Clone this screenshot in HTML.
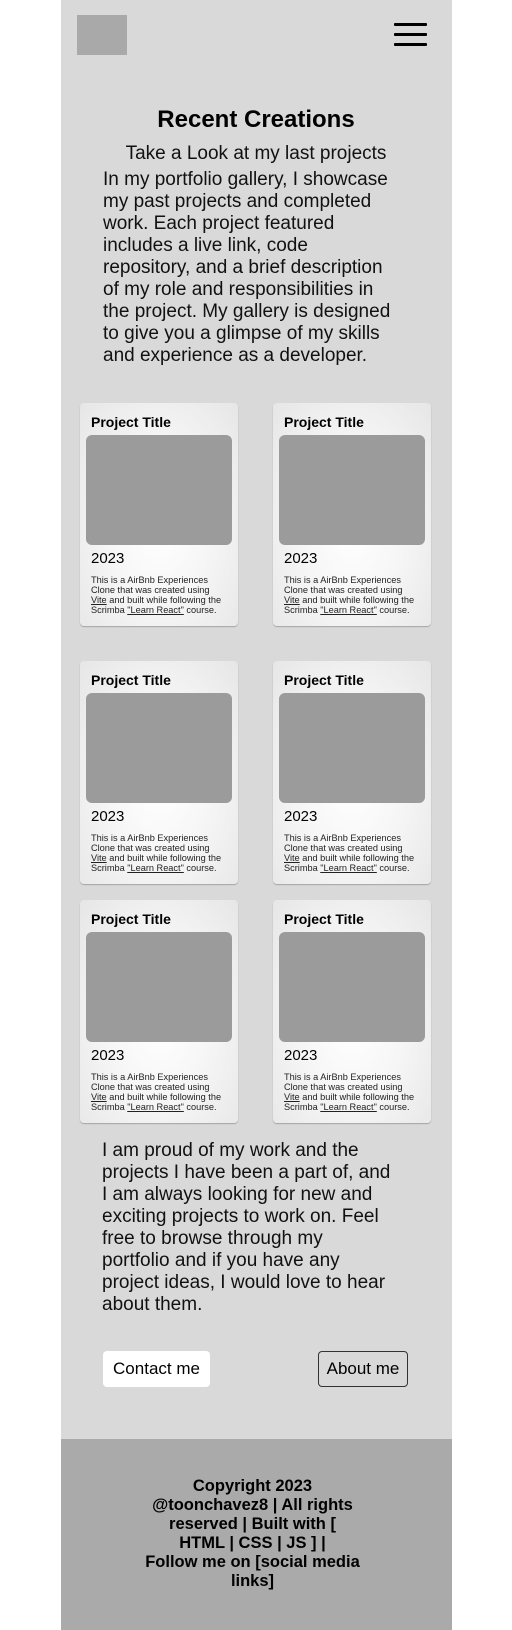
<!DOCTYPE html>
<html><head><meta charset="utf-8"><style>
*{margin:0;padding:0;box-sizing:border-box}
body{width:512px;height:1630px;background:#fff;font-family:"Liberation Sans",sans-serif;color:#000;position:relative;overflow:hidden}
.col{position:absolute;left:61px;top:0;width:391px;height:1630px;background:#d9d9d9}
.logo{position:absolute;left:77px;top:15px;width:50px;height:40px;background:#a9a9a9}
.hb{position:absolute;left:394px;width:33px;height:3px;background:#000;border-radius:1px}
.t{position:absolute;white-space:nowrap}
.card{position:absolute;width:158px;height:223px;border-radius:4px;background:radial-gradient(ellipse at 50% 55%,#fff 0%,#f6f6f6 45%,#e6e6e6 100%);box-shadow:0 1px 1px rgba(0,0,0,.25)}
.card .pt{position:absolute;left:11px;top:11px;font-weight:bold;font-size:14px}
.card .img{position:absolute;left:6px;top:32px;width:146px;height:110px;background:#9b9b9b;border-radius:6px}
.card .yr{position:absolute;left:11px;top:147px;font-size:15px}
.card .d{position:absolute;left:11px;top:172px;font-size:9.2px;line-height:10px;width:150px;color:#222;white-space:nowrap}
.card u{text-decoration:underline}
.p{position:absolute;font-size:19px;line-height:22px;color:#111}
.btn{position:absolute;top:1351px;height:36px;font-size:17px;line-height:36px;text-align:center;border-radius:4px}
.foot{position:absolute;left:61px;top:1439px;width:391px;height:191px;background:#aaa}
.ft{position:absolute;left:-4px;width:391px;top:38px;text-align:center;font-weight:bold;font-size:16.5px;line-height:19px;white-space:nowrap}
</style></head><body>
<div class="col"></div>
<div class="logo"></div>
<div class="hb" style="top:23px"></div><div class="hb" style="top:33px"></div><div class="hb" style="top:43px"></div>
<div class="t" style="left:0;width:512px;text-align:center;top:106px;font-size:24px;font-weight:bold">Recent Creations</div>
<div class="t" style="left:0;width:512px;text-align:center;top:143px;font-size:19px;color:#111">Take a Look at my last projects</div>
<div class="p" style="left:103px;top:169px;width:310px">In my portfolio gallery, I showcase<br>my past projects and completed<br>work. Each project featured<br>includes a live link, code<br>repository, and a brief description<br>of my role and responsibilities in<br>the project. My gallery is designed<br>to give you a glimpse of my skills<br>and experience as a developer.</div>

<div class="card" style="left:80px;top:403px"><div class="pt">Project Title</div><div class="img"></div><div class="yr">2023</div><div class="d">This is a AirBnb Experiences<br>Clone that was created using<br><u>Vite</u> and built while following the<br>Scrimba <u>"Learn React"</u> course.</div></div>
<div class="card" style="left:273px;top:403px"><div class="pt">Project Title</div><div class="img"></div><div class="yr">2023</div><div class="d">This is a AirBnb Experiences<br>Clone that was created using<br><u>Vite</u> and built while following the<br>Scrimba <u>"Learn React"</u> course.</div></div>
<div class="card" style="left:80px;top:661px"><div class="pt">Project Title</div><div class="img"></div><div class="yr">2023</div><div class="d">This is a AirBnb Experiences<br>Clone that was created using<br><u>Vite</u> and built while following the<br>Scrimba <u>"Learn React"</u> course.</div></div>
<div class="card" style="left:273px;top:661px"><div class="pt">Project Title</div><div class="img"></div><div class="yr">2023</div><div class="d">This is a AirBnb Experiences<br>Clone that was created using<br><u>Vite</u> and built while following the<br>Scrimba <u>"Learn React"</u> course.</div></div>
<div class="card" style="left:80px;top:900px"><div class="pt">Project Title</div><div class="img"></div><div class="yr">2023</div><div class="d">This is a AirBnb Experiences<br>Clone that was created using<br><u>Vite</u> and built while following the<br>Scrimba <u>"Learn React"</u> course.</div></div>
<div class="card" style="left:273px;top:900px"><div class="pt">Project Title</div><div class="img"></div><div class="yr">2023</div><div class="d">This is a AirBnb Experiences<br>Clone that was created using<br><u>Vite</u> and built while following the<br>Scrimba <u>"Learn React"</u> course.</div></div>

<div class="p" style="left:102px;top:1140px;width:310px">I am proud of my work and the<br>projects I have been a part of, and<br>I am always looking for new and<br>exciting projects to work on. Feel<br>free to browse through my<br>portfolio and if you have any<br>project ideas, I would love to hear<br>about them.</div>
<div class="btn" style="left:103px;width:107px;background:#fff">Contact me</div>
<div class="btn" style="left:318px;width:90px;border:1.5px solid #333;line-height:33px">About me</div>
<div class="foot"><div class="ft">Copyright 2023<br>@toonchavez8 | All rights<br>reserved | Built with [<br>HTML | CSS | JS ] |<br>Follow me on [social media<br>links]</div></div>
</body></html>
